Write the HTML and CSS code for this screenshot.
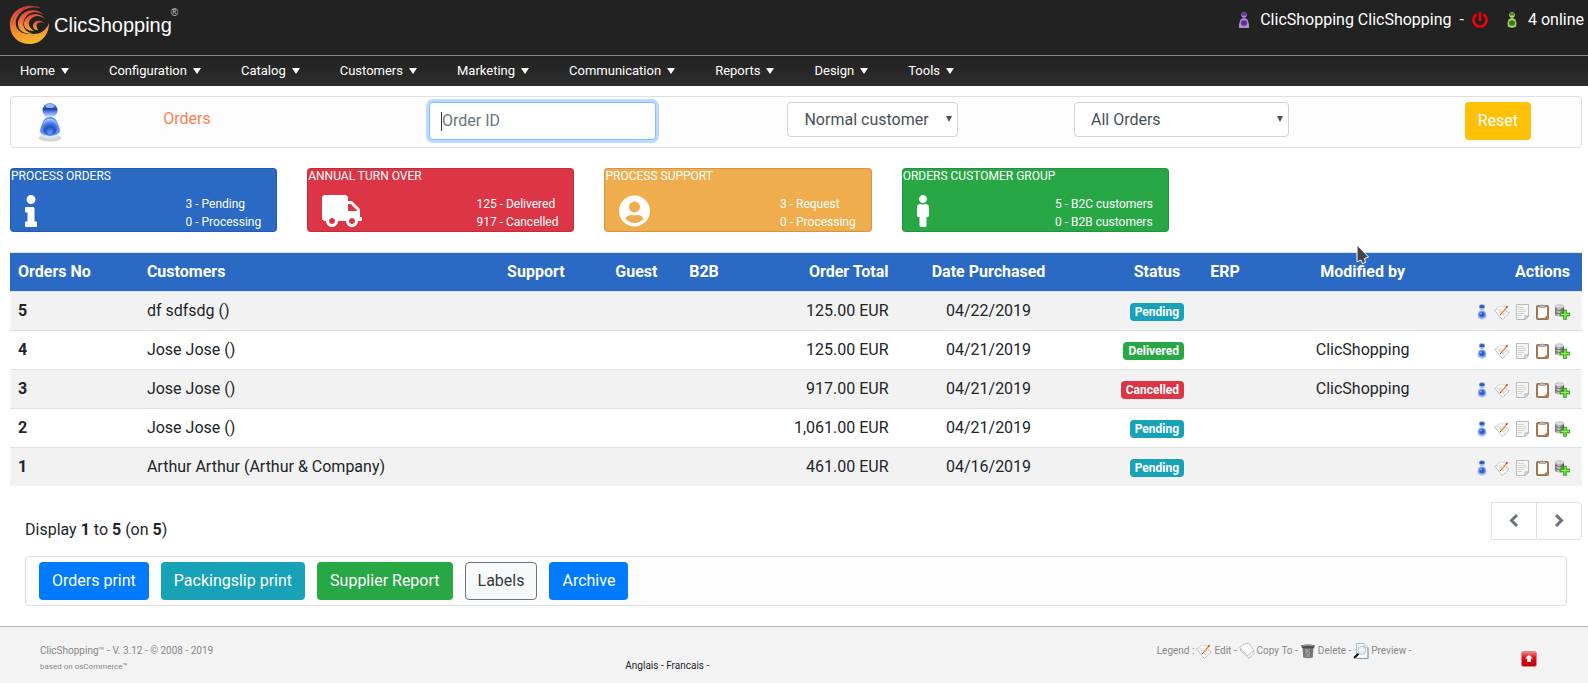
FILE: index.html
```html
<!DOCTYPE html>
<html lang="en">

<head>
    <meta charset="UTF-8" />
    <meta name="viewport" content="width=device-width, initial-scale=1.0" />
    <title>ClicShopping - Orders</title>
    <link rel="stylesheet" href="styles.css">
</head>

<body>
    <!-- shared icons -->
    <svg class="sprite" width="0" height="0" aria-hidden="true">
        <defs>
            <linearGradient id="swirl" x1="0" y1="0" x2="0.2" y2="1">
                <stop offset="0" stop-color="#e23b36" />
                <stop offset="0.5" stop-color="#f0753a" />
                <stop offset="1" stop-color="#f4b529" />
            </linearGradient>
            <radialGradient id="blueBody" cx="0.5" cy="0.85" r="0.8">
                <stop offset="0" stop-color="#6f9dff" />
                <stop offset="0.45" stop-color="#2450b8" />
                <stop offset="0.75" stop-color="#4f7fee" />
                <stop offset="1" stop-color="#a9c4ff" />
            </radialGradient>
            <linearGradient id="blueHead" x1="0" y1="0" x2="0" y2="1">
                <stop offset="0" stop-color="#6f9bf5" />
                <stop offset="0.4" stop-color="#1c3f9e" />
                <stop offset="0.65" stop-color="#6d97f5" />
                <stop offset="1" stop-color="#f4f8ff" />
            </linearGradient>
            <linearGradient id="metal" x1="0" y1="0" x2="1" y2="0">
                <stop offset="0" stop-color="#777" />
                <stop offset="0.4" stop-color="#ccc" />
                <stop offset="1" stop-color="#555" />
            </linearGradient>
            <linearGradient id="red" x1="0" y1="0" x2="0" y2="1">
                <stop offset="0" stop-color="#f88" />
                <stop offset="0.4" stop-color="#e30b17" />
                <stop offset="1" stop-color="#b5000c" />
            </linearGradient>
        </defs>
        <symbol id="i-person" viewBox="0 0 16 16">
            <path d="M4 14 3.500 11.500Q4 8 6.500 7.500h3Q12 8 12.500 11.500L12 14 8 16Z" fill="#b9ccf7" />
            <ellipse cx="8" cy="3" rx="3" ry="3" fill="#9dbaf5" />
            <ellipse cx="8" cy="2.600" rx="2.700" ry="1.600" fill="#3059c0" />
            <ellipse cx="8" cy="10.500" rx="4" ry="4" fill="#7fa4f5" />
            <ellipse cx="8" cy="10.500" rx="2.600" ry="2.600" fill="#2f5cc6" />
            <ellipse cx="7" cy="9.500" rx="1" ry="1" fill="#7fa7ff" />
        </symbol>
        <symbol id="i-edit" viewBox="0 0 16 16">
            <path d="M.700 6.500 6 2.500 15.300 9 8.500 15.500Z" fill="#fff" stroke="#999" stroke-width=".8" stroke-dasharray="1.500 .500" />
            <path d="M2.500 5 6 2l6 1-3 8Z" fill="#fafafa" stroke="#ccc" stroke-width=".6" />
            <path d="M4.500 6h3M5 8h3M8.500 12l4-4" stroke="#bbb" stroke-width=".6" />
            <path d="M7 10 12.500 3.500" stroke="#e79a35" stroke-width="1.400" />
            <path d="M12.200 3.800 13.500 2.200" stroke="#b33" stroke-width="1.400" />
            <path d="M6.200 10.900 7.200 9.700" stroke="#444" />
        </symbol>
        <symbol id="i-sheet" viewBox="0 0 16 16">
            <path d="M2.500.500h12V12L11 15.500H2.500Z" fill="#f4f4f4" stroke="#bbb" />
            <path d="M4 3.500h6M4 5.500h8M4 7.500h8M4 9.500h6M4 11.500h4" stroke="#ccc" stroke-width=".8" />
            <path d="M14.500 12H11v3.500Z" fill="#fff" stroke="#aaa" />
        </symbol>
        <symbol id="i-clipboard" viewBox="0 0 16 16">
            <rect x="2.500" y="1.500" width="12" height="14" rx="1" fill="#b07a50" stroke="#a0714f" />
            <path d="M4 3h9v8.500L10.500 14H4Z" fill="#fff" />
            <path d="M13 11.500h-2.500V14Z" fill="#ddd" />
            <path d="M5.200 1.500h2q1-2 2.200 0h2V3.500H5.200Z" fill="#bbb" stroke="#888" stroke-width=".6" />
        </symbol>
        <symbol id="i-stock" viewBox="0 0 16 16">
            <path d="M1 2.500v8.500q4.500 3 9 0V2.500Z" fill="url(#metal)" />
            <ellipse cx="5.500" cy="2.500" rx="4.500" ry="1.800" fill="#ddd" stroke="#999" stroke-width=".5" />
            <path d="M1 5.500q4.500 2.500 9 0M1 8.500q4.500 2.500 9 0" fill="none" stroke="#555" stroke-width=".7" />
            <path d="M9.500 6h3v3H16v3h-3.500v3.500h-3V12H6V9h3.500Z" fill="#45c51e" stroke="#2f9213" stroke-width=".6" />
            <path d="M11 7v7.500M7 10.500h8" stroke="#93f35c" />
        </symbol>
        <symbol id="i-copy" viewBox="0 0 16 16">
            <path d="M1 7 4 2.500 9.500 3 15.500 10 10 15.500Z" fill="#f2f2f2" stroke="#999" stroke-width=".8" stroke-dasharray="1.500 .500" />
            <path d="M.800 4.500 5 1l5-.5 4.500 7-6 5Z" fill="#fff" stroke="#999" stroke-width=".8" stroke-dasharray="1.500 .500" />
        </symbol>
        <symbol id="i-trash" viewBox="0 0 16 16">
            <path d="M2.500 4.500h11L12.800 14.500Q8 16 3.200 14.500Z" fill="#777" />
            <path d="M5 5.500h5V14H5.500Z" fill="#a0a0a0" />
            <path d="M4.500 7 11 13M4.500 10l4 4M7 5.500l5 4.500M11.500 6l-6 7" stroke="#606060" stroke-width=".6" />
            <path d="M1 2.500Q8 .500 15 2.500L14 5Q8 6 2 5Z" fill="#4c4c4c" />
            <path d="M2.500 3Q8 1.500 13.500 3" fill="none" stroke="#aaa" stroke-width=".8" />
        </symbol>
        <symbol id="i-preview" viewBox="0 0 16 16">
            <path d="M3.500.500H11L15 4.500v11H3.500Z" fill="#f7f9fb" stroke="#a9bccb" />
            <path d="M15 4.500v11H3.500" fill="none" stroke="#7f9db5" />
            <path d="M11 .500v4h4" fill="#dfe7ee" stroke="#a9bccb" stroke-width=".8" />
            <circle cx="8.800" cy="7.300" r="4" fill="#edf2f5" stroke="#bbb" />
            <path d="M5.500 10.800 1 15" stroke="#111" stroke-width="2" />
        </symbol>
    </svg>

    <header class="header">
        <a class="logo" href="#">
            <svg class="logo-mark" viewBox="0 0 40 40" aria-hidden="true">
                <g fill="url(#swirl)">
                    <path d="M31 3C18-3 0 4 0 20c0 12 9 19 20 19 11 0 19-9 19-21-3 8-9 11-16 11C11 30 4 24 6 15 9 6 18 0 31 3Z" />
                    <path d="M34 10C26 2 11 4 8 17c-1 8 5 12 15 12-9-3-11-8-9-14C17 7 26 5 34 10Z" />
                    <path d="M35 14C29 6 17 8 14 17c-1 6 4 9 10 9-6-4-6-8-4-11 4-5 10-5 15-1Z" />
                    <path d="M35 19c-4-5-11-4-12 1 0 4 2 5 5 5-2-3-2-6 0-7 2-1 5-1 7 1Z" />
                </g>
                <path d="M27 2C14-1 3 9 2 20" fill="none" stroke="#222" stroke-width=".5" opacity=".6" />
            </svg>
            <span class="logo-text">ClicShopping</span>
            <span class="logo-reg">®</span>
        </a>
        <div class="user-bar">
            <svg class="user-icon" viewBox="0 0 10 16" aria-hidden="true">
                <path d="M0 16V13Q1 7 3 7h4q2 0 3 6v3Z" fill="#a79ab0" />
                <circle cx="5" cy="3" r="2.800" fill="#b27fdc" />
                <ellipse cx="5" cy="2.200" rx="2.600" ry="1.500" fill="#6a2ca0" />
                <ellipse cx="5" cy="10.500" rx="4" ry="4.500" fill="#b080dd" />
                <ellipse cx="5" cy="11" rx="3" ry="2.800" fill="#652a9c" />
            </svg>
            <span class="user-name">ClicShopping ClicShopping</span>
            <span>-</span>
            <a class="power" href="#" aria-label="Log off">
                <svg viewBox="0 0 512 512" fill="#f00"><path d="M400 54.1c63 45 104 118.6 104 201.9 0 136.8-110.8 247.7-247.5 248C120 504.3 8.200 393 8 256.4 7.900 173.1 48.9 99.3 111.8 54.2c11.7-8.300 28-4.800 35 7.700L162.6 90c5.900 10.5 3.100 23.8-6.600 31-41.5 30.8-68 79.6-68 134.9-.1 92.3 74.5 168.1 168 168.1 91.6 0 168.6-74.2 168-169.1-.3-51.8-24.7-101.8-68.1-134-9.700-7.200-12.4-20.5-6.500-30.9l15.8-28.1c7-12.4 23.2-16.1 34.8-7.800zM296 264V24c0-13.3-10.7-24-24-24h-32c-13.3 0-24 10.7-24 24v240c0 13.3 10.7 24 24 24h32c13.3 0 24-10.7 24-24z" /></svg>
            </a>
            <svg class="user-icon" viewBox="0 0 10 16" aria-hidden="true">
                <path d="M1 15 .500 12Q1 7 3 7h4q2 0 2.500 5L9 15 5 16Z" fill="#8db873" />
                <circle cx="5" cy="3" r="2.800" fill="#b5dd86" />
                <ellipse cx="5" cy="2.200" rx="2.600" ry="1.500" fill="#4c8a12" />
                <ellipse cx="5" cy="10.500" rx="4" ry="4.500" fill="#a5d86a" />
                <ellipse cx="5" cy="11" rx="3" ry="2.800" fill="#3d7a08" />
            </svg>
            <span>4 online</span>
        </div>
    </header>

    <nav class="menu">
        <a href="#">Home</a>
        <a href="#">Configuration</a>
        <a href="#">Catalog</a>
        <a href="#">Customers</a>
        <a href="#">Marketing</a>
        <a href="#">Communication</a>
        <a href="#">Reports</a>
        <a href="#">Design</a>
        <a href="#">Tools</a>
    </nav>

    <main class="content">
        <section class="panel filters">
            <svg class="page-icon" viewBox="0 0 24 40" aria-hidden="true">
                <ellipse cx="12" cy="36" rx="11.500" ry="3.500" fill="#bbb" opacity=".6" />
                <circle cx="12" cy="8.500" r="7.500" fill="url(#blueHead)" />
                <ellipse cx="12" cy="4" rx="4.500" ry="2" fill="#a9c4ff" opacity=".8" />
                <path d="M1.500 30Q1.500 26 5 19 7 15 12 15t7 4q3.500 7 3.500 11Q21 36.500 12 36.500T1.500 30Z" fill="#dbe7ff" />
                <path d="M2 29Q2.500 25 5.500 19 7.500 15 12 15t6.500 4q3 6 3.500 10-1 4-10 5Q3 33 2 29Z" fill="#5f8df2" />
                <ellipse cx="12" cy="25" rx="7.500" ry="8.500" fill="url(#blueBody)" />
            </svg>
            <h1 class="page-title">Orders</h1>
            <div class="field">
                <input class="search" type="text" placeholder="Order ID" aria-label="Order ID">
                <span class="caret"></span>
            </div>
            <div class="field">
                <span class="select select-group">
                    <select aria-label="Customer group">
                        <option>Normal customer</option>
                    </select>
                </span>
            </div>
            <div class="field">
                <span class="select select-status">
                    <select aria-label="Order status">
                        <option>All Orders</option>
                    </select>
                </span>
            </div>
            <button class="btn btn-warning" type="button">Reset</button>
        </section>

        <section class="stats">
            <div class="stat stat-blue">
                <h2>Process orders</h2>
                <div class="stat-body">
                    <svg viewBox="0 0 192 512" width="12" height="32"><path d="M20 424.229h20V279.771H20c-11.046 0-20-8.954-20-20V212c0-11.046 8.954-20 20-20h112c11.046 0 20 8.954 20 20v212.229h20c11.046 0 20 8.954 20 20V492c0 11.046-8.954 20-20 20H20c-11.046 0-20-8.954-20-20v-47.771c0-11.046 8.954-20 20-20zM96 0C56.235 0 24 32.235 24 72s32.235 72 72 72 72-32.235 72-72S135.764 0 96 0z" /></svg>
                    <p>3 - Pending<br>0 - Processing</p>
                </div>
            </div>
            <div class="stat stat-red">
                <h2>Annual turn over</h2>
                <div class="stat-body">
                    <svg viewBox="0 0 640 512" width="40" height="32"><path d="M624 352h-16V243.900c0-12.700-5.100-24.900-14.100-33.900L494 110.100c-9-9-21.200-14.100-33.900-14.100H416V48c0-26.500-21.500-48-48-48H48C21.500 0 0 21.500 0 48v320c0 26.500 21.500 48 48 48h16c0 53 43 96 96 96s96-43 96-96h128c0 53 43 96 96 96s96-43 96-96h48c8.800 0 16-7.200 16-16v-32c0-8.800-7.200-16-16-16zM160 464c-26.500 0-48-21.500-48-48s21.500-48 48-48 48 21.500 48 48-21.500 48-48 48zm320 0c-26.500 0-48-21.500-48-48s21.500-48 48-48 48 21.500 48 48-21.500 48-48 48zm80-208H416V144h44.100l99.900 99.900V256z" /></svg>
                    <p>125 - Delivered<br>917 - Cancelled</p>
                </div>
            </div>
            <div class="stat stat-orange">
                <h2>Process support</h2>
                <div class="stat-body">
                    <svg viewBox="0 0 496 512" width="31" height="32"><path d="M248 8C111 8 0 119 0 256s111 248 248 248 248-111 248-248S385 8 248 8zm0 96c48.600 0 88 39.400 88 88s-39.400 88-88 88-88-39.400-88-88 39.400-88 88-88zm0 344c-58.700 0-111.300-26.600-146.500-68.200 18.800-35.400 55.600-59.800 98.500-59.800 2.400 0 4.800.400 7.100 1.100 13 4.200 26.600 6.900 40.900 6.900 14.300 0 28-2.700 40.900-6.900 2.300-.700 4.700-1.100 7.100-1.100 42.900 0 79.700 24.400 98.500 59.800C359.300 421.400 306.700 448 248 448z" /></svg>
                    <p>3 - Request<br>0 - Processing</p>
                </div>
            </div>
            <div class="stat stat-green">
                <h2>Orders customer group</h2>
                <div class="stat-body">
                    <svg viewBox="0 0 192 512" width="12" height="32"><path d="M96 0c35.346 0 64 28.654 64 64s-28.654 64-64 64-64-28.654-64-64S60.654 0 96 0m48 144h-11.360c-22.711 10.443-49.590 10.894-73.280 0H48c-26.510 0-48 21.490-48 48v136c0 13.255 10.745 24 24 24h16v136c0 13.255 10.745 24 24 24h64c13.255 0 24-10.745 24-24V352h16c13.255 0 24-10.745 24-24V192c0-26.510-21.490-48-48-48z" /></svg>
                    <p>5 - B2C customers<br>0 - B2B customers</p>
                </div>
            </div>
        </section>

        <table class="orders">
            <thead>
                <tr>
                    <th class="col-no">Orders No</th>
                    <th class="col-customer">Customers</th>
                    <th class="col-support">Support</th>
                    <th class="col-guest">Guest</th>
                    <th class="col-b2b">B2B</th>
                    <th class="col-total">Order Total</th>
                    <th class="col-date">Date Purchased</th>
                    <th class="col-status">Status</th>
                    <th class="col-erp">ERP</th>
                    <th class="col-modified">Modified by</th>
                    <th class="col-actions">Actions</th>
                </tr>
            </thead>
            <tbody id="orderRows"></tbody>
        </table>

        <div class="paging">
            <p>Display <b>1</b> to <b>5</b> (on <b>5</b>)</p>
            <div class="pager">
                <a href="#" aria-label="Previous"><svg width="10" height="14" viewBox="0 0 10 14"><path d="M8 1 2.500 6.500 8 12" /></svg></a>
                <a href="#" aria-label="Next"><svg width="10" height="14" viewBox="0 0 10 14"><path d="M2 1 7.500 6.500 2 12" /></svg></a>
            </div>
        </div>

        <section class="panel tools">
            <button class="btn btn-primary" type="button">Orders print</button>
            <button class="btn btn-info" type="button">Packingslip print</button>
            <button class="btn btn-success" type="button">Supplier Report</button>
            <button class="btn btn-light" type="button">Labels</button>
            <button class="btn btn-primary" type="button">Archive</button>
        </section>
    </main>

    <footer class="footer">
        <div class="copyright">
            <p>ClicShopping™ - V. 3.12 - © 2008 - 2019</p>
            <p class="based">based on osCommerce™</p>
        </div>
        <p class="languages"><a href="#">Anglais</a> - <a href="#">Francais</a> -</p>
        <div class="legend">
            <span>Legend :</span>
            <svg class="icon"><use href="#i-edit" /></svg>
            <span>Edit -</span>
            <svg class="icon"><use href="#i-copy" /></svg>
            <span>Copy To -</span>
            <svg class="icon"><use href="#i-trash" /></svg>
            <span>Delete -</span>
            <svg class="icon"><use href="#i-preview" /></svg>
            <span>Preview -</span>
        </div>
        <a class="to-top" href="#" aria-label="Back to top">
            <svg class="icon" viewBox="0 0 16 16">
                <rect x=".500" y=".500" width="15" height="15" rx="2" fill="url(#red)" stroke="#d88" />
                <path d="M8 3.500 12 7.500H9.800v3.500H6.200V7.500H4Z" fill="#fff" />
            </svg>
        </a>
    </footer>

    <svg class="pointer" width="14" height="22" viewBox="0 0 14 22" aria-hidden="true">
        <path d="M1 1v17l4-2 1.500 3.500 3-1-1-4 4-1.500Z" fill="#444" stroke="#fff" />
    </svg>

    <script>
        const orders = [
            { no: 5, customer: "df sdfsdg ()", total: "125.00 EUR", date: "04/22/2019", status: "Pending", by: "" },
            { no: 4, customer: "Jose Jose ()", total: "125.00 EUR", date: "04/21/2019", status: "Delivered", by: "ClicShopping" },
            { no: 3, customer: "Jose Jose ()", total: "917.00 EUR", date: "04/21/2019", status: "Cancelled", by: "ClicShopping" },
            { no: 2, customer: "Jose Jose ()", total: "1,061.00 EUR", date: "04/21/2019", status: "Pending", by: "" },
            { no: 1, customer: "Arthur Arthur (Arthur &amp; Company)", total: "461.00 EUR", date: "04/16/2019", status: "Pending", by: "" }
        ];
        const actions = [
            ["person", "Customer"],
            ["edit", "Edit"],
            ["sheet", "Invoice"],
            ["clipboard", "Packing slip"],
            ["stock", "Restock"]
        ];
        const links = actions.map(([icon, label]) =>
            `<a href="#" aria-label="${label}"><svg class="icon"><use href="#i-${icon}" /></svg></a>`
        ).join("");

        document.getElementById("orderRows").innerHTML = orders.map(o => `
            <tr>
                <th scope="row">${o.no}</th>
                <td>${o.customer}</td>
                <td></td>
                <td></td>
                <td></td>
                <td class="right">${o.total}</td>
                <td class="center">${o.date}</td>
                <td class="right"><span class="badge ${o.status.toLowerCase()}">${o.status}</span></td>
                <td></td>
                <td class="center">${o.by}</td>
                <td><div class="actions">${links}</div></td>
            </tr>`).join("");
    </script>
</body>

</html>
```
FILE: styles.css
```css
:root {
    --blue: #2a69c4;
    --text: #212529;
    --line: #dee2e6;
    --info: #17a2b8;
    --success: #28a745;
    --danger: #dc3545;
    --primary: #007bff;
}

* {
    box-sizing: border-box;
    margin: 0;
    padding: 0;
}

body {
    font-family: Roboto, sans-serif;
    font-size: 16px;
    line-height: 24px;
    color: var(--text);
    background: #fff;
    position: relative;
}

a {
    color: inherit;
    text-decoration: none;
}

svg {
    display: block;
    flex: none;
}

.sprite {
    position: absolute;
}

.icon {
    width: 16px;
    height: 16px;
}

/* header */
.header {
    display: flex;
    justify-content: space-between;
    align-items: flex-start;
    height: 56px;
    padding: 5px 4px 0 10px;
    background: #222;
    border-bottom: 1px solid #888;
    color: #fff;
}

.logo {
    display: flex;
    align-items: flex-start;
}

.logo-mark {
    width: 40px;
    height: 40px;
    margin-right: 4px;
}

.logo-text {
    font-family: "Liberation Sans", Arial, sans-serif;
    font-size: 20px;
    line-height: 40px;
}

.logo-reg {
    margin-left: -1px;
    font-family: "Liberation Sans", Arial, sans-serif;
    font-size: 10px;
    line-height: 16px;
    color: #ccc;
}

.user-bar {
    display: flex;
    align-items: center;
    padding-top: 3px;
}

.user-icon {
    width: 10px;
    height: 16px;
    margin-right: 11px;
}

.user-name {
    margin-right: 8px;
}

.power {
    margin: 0 19px 0 8px;
}

.power svg {
    width: 16px;
    height: 16px;
}

.menu {
    display: flex;
    height: 30px;
    background: linear-gradient(#222, #2d2d2d);
    color: #fff;
    font-size: 13px;
    line-height: 30px;
}

.menu a {
    display: flex;
    align-items: center;
    gap: 6px;
    padding: 0 20px;
}

.menu a::after {
    content: "";
    border: 4px solid transparent;
    border-top: 6px solid #fff;
    border-bottom: 0;
}

/* content */
.content {
    padding: 10px 6px 20px 10px;
}

.panel {
    background: #fdfdfd;
    border: 1px solid #dfdfdf;
    border-radius: 4px;
}

.filters {
    display: grid;
    grid-template-columns: 9.7% 1fr 18.3% 23.8% 15.5% 17.7%;
    align-items: start;
    padding: 5px 0;
}

.page-icon {
    width: 24px;
    height: 40px;
    margin-left: 27px;
}

.page-title {
    padding-top: 5px;
    font-size: 16px;
    font-weight: 400;
    color: coral;
}

.field {
    position: relative;
    display: flex;
    justify-content: center;
}

.search {
    width: 227px;
    height: 38px;
    padding: 5px 12px 7px;
    font: inherit;
    color: #495057;
    border: 1px solid #80bdff;
    border-radius: 4px;
    outline: 0;
    box-shadow: 0 0 0 3px rgba(0, 123, 255, .25);
}

.search::placeholder {
    color: #6c757d;
}

.caret {
    position: absolute;
    top: 10px;
    left: calc(50% - 101px);
    width: 1px;
    height: 19px;
    background: #333;
}

.select {
    position: relative;
}

.select::after {
    content: "";
    position: absolute;
    top: 14px;
    right: 6px;
    border: 3px solid transparent;
    border-top: 6px solid #495057;
    border-bottom: 0;
    pointer-events: none;
}

.select select {
    display: block;
    width: 100%;
    height: 35px;
    padding: 0 16px;
    font: inherit;
    color: #495057;
    background: #fff;
    border: 1px solid #ced4da;
    border-radius: 4px;
    appearance: none;
}

.select-group {
    width: 171px;
}

.select-status {
    width: 215px;
}

.filters .btn {
    justify-self: end;
    margin-right: 50px;
}

.btn {
    height: 38px;
    padding: 0 12px;
    font: inherit;
    color: #fff;
    border: 1px solid transparent;
    border-radius: 4px;
    cursor: pointer;
}

.btn-primary {
    background: var(--primary);
}

.btn-info {
    background: var(--info);
}

.btn-success {
    background: var(--success);
}

.btn-warning {
    background: #ffc107;
}

.btn-light {
    color: #343a40;
    background: #f8f9fa;
    border-color: #6c757d;
}

/* stat boxes */
.stats {
    display: flex;
    gap: 30px;
    margin: 20px 0;
}

.stat {
    width: 17%;
    height: 64px;
    border: 1px solid rgba(0, 0, 0, .125);
    border-radius: 4px;
    color: #fff;
    font-size: 12px;
    line-height: 18px;
}

.stat h2 {
    font-size: 12px;
    font-weight: 400;
    line-height: 14px;
    text-transform: uppercase;
}

.stat-body {
    display: flex;
    justify-content: space-between;
    align-items: flex-start;
    padding: 12px 15px 0 14px;
}

.stat-body svg {
    fill: #fff;
}

.stat-blue {
    background: var(--blue);
}

.stat-red {
    background: var(--danger);
}

.stat-orange {
    background: #f0ad4e;
}

.stat-green {
    background: var(--success);
}

/* orders table */
.orders {
    width: 100%;
    table-layout: fixed;
    border-spacing: 0;
}

.orders th,
.orders td {
    height: 39px;
    padding: 7px 8px;
    border-top: 1px solid var(--line);
    text-align: left;
    white-space: nowrap;
}

.orders thead th {
    background: var(--blue);
    color: #fff;
}

.orders th {
    font-weight: 700;
}

.orders tbody tr:nth-child(odd) {
    background: #f2f2f2;
}

.orders .right,
.orders .col-total {
    text-align: right;
}

.orders .center,
.orders .col-support,
.orders .col-guest,
.orders .col-b2b,
.orders .col-date,
.orders .col-erp,
.orders .col-modified {
    text-align: center;
}

.orders .col-status,
.orders .col-actions {
    padding-right: 12px;
    text-align: right;
}

.col-no { width: 8.2%; }
.col-customer { width: 21.7%; }
.col-support { width: 7.1%; }
.col-guest { width: 5.7%; }
.col-b2b { width: 2.9%; }
.col-total { width: 10.8%; }
.col-date { width: 11.7%; }
.col-status { width: 7.1%; }
.col-erp { width: 4.2%; }
.col-modified { width: 13.3%; }
.col-actions { width: 7.3%; }

.badge {
    display: inline-block;
    padding: 3px 5px;
    border-radius: 4px;
    color: #fff;
    font-size: 12px;
    font-weight: 700;
    line-height: 12px;
    vertical-align: baseline;
}

.pending {
    background: var(--info);
}

.delivered {
    background: var(--success);
}

.cancelled {
    background: var(--danger);
}

.actions {
    display: flex;
    justify-content: flex-end;
    gap: 4px;
    padding: 2px 4px 0 0;
}

/* paging and tools */
.paging {
    display: flex;
    justify-content: space-between;
    align-items: flex-start;
    margin: 16px 0 14px;
    padding-left: 15px;
}

.paging p {
    padding-top: 16px;
}

.pager {
    display: flex;
}

.pager a {
    display: flex;
    justify-content: center;
    align-items: center;
    width: 46px;
    height: 38px;
    border: 1px solid var(--line);
}

.pager a + a {
    margin-left: -1px;
    border-radius: 0 4px 4px 0;
}

.pager path {
    fill: none;
    stroke: #6c757d;
    stroke-width: 3;
}

.tools {
    display: flex;
    gap: 12px;
    margin: 0 15px;
    padding: 5px 13px;
}

/* footer */
.footer {
    display: grid;
    grid-template-columns: 39.1% 35.5% 1fr auto;
    padding: 16px 51px 8px 40px;
    background: #f3f3f3;
    border-top: 1px solid #b5b5b5;
    color: #888;
    font-size: 10px;
    line-height: 16px;
}

.based {
    font-size: 8px;
}

.languages {
    padding-top: 15px;
    color: var(--text);
}

.legend {
    display: flex;
    align-items: flex-start;
    gap: 2px;
}

.to-top {
    padding-top: 8px;
}

/* mouse pointer over the table header */
.pointer {
    position: absolute;
    top: 244px;
    left: 1356px;
}
```
